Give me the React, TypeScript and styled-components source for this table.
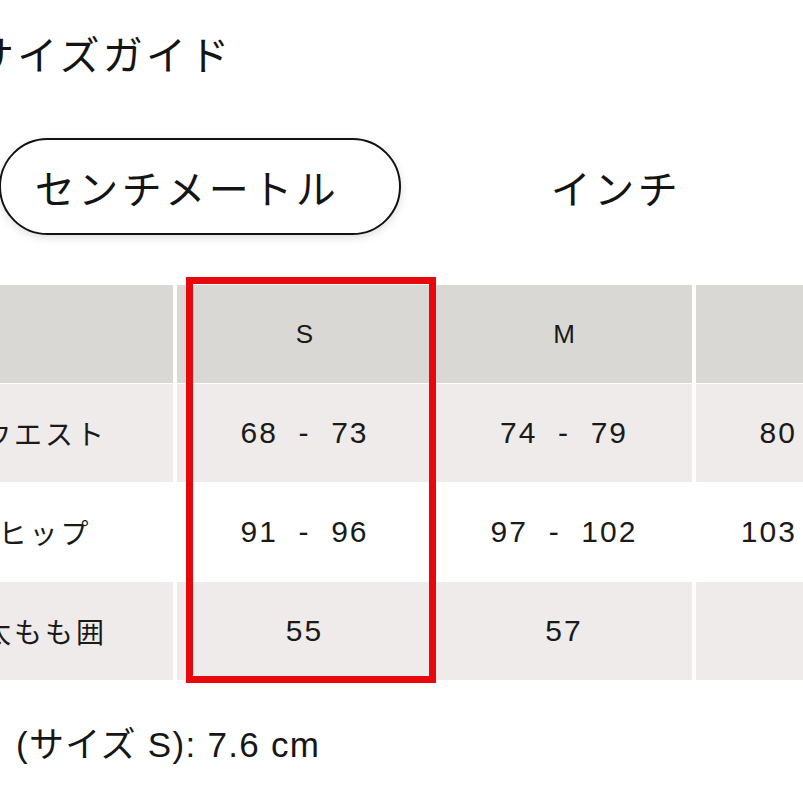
import React from "react";
import styled, { createGlobalStyle } from "styled-components";

const GlobalStyle = createGlobalStyle`
  html, body {
    margin: 0;
    padding: 0;
    background: #ffffff;
    overflow: hidden;
  }
  body {
    width: 803px;
    height: 803px;
    font-family: "Liberation Sans", "Noto Sans CJK JP", sans-serif;
    color: #161616;
  }
`;

const Page = styled.div`
  display: flex;
  flex-direction: column;
  align-items: flex-start;
  padding-top: 32px;
  width: 803px;
  overflow: hidden;
`;

const Title = styled.h1`
  margin: 0 0 0 -26px;
  font-family: "Noto Sans CJK JP", sans-serif;
  font-weight: 400;
  font-size: 40px;
  line-height: 42px;
  letter-spacing: 3.3px;
  white-space: nowrap;
  color: #141414;
`;

const Tabs = styled.div`
  display: flex;
  gap: 27px;
  margin: 64px 0 0 -1px;
`;

const Tab = styled.button<{ $active?: boolean }>`
  box-sizing: border-box;
  width: 402px;
  height: 97px;
  border-radius: 49px;
  border: 2.5px solid ${(p) => (p.$active ? "#121212" : "transparent")};
  background: #ffffff;
  box-shadow: ${(p) => (p.$active ? "0 3px 9px rgba(0, 0, 0, 0.13)" : "none")};
  display: flex;
  align-items: center;
  justify-content: center;
  padding: 0 26px 0 0;
  font-family: "Noto Sans CJK JP", sans-serif;
  font-weight: 400;
  font-size: 40px;
  letter-spacing: 3.5px;
  color: #141414;
  white-space: nowrap;
`;

const TableWrap = styled.div`
  position: relative;
  margin: 50px 0 0 -83px;
`;

const Grid = styled.div`
  display: grid;
  grid-template-columns: repeat(4, 256px);
  grid-auto-rows: 98px;
  column-gap: 3.5px;
  row-gap: 1px;
  background: #ffffff;
`;

const Cell = styled.div<{ $tone: "head" | "shade" | "plain" }>`
  display: flex;
  align-items: center;
  justify-content: center;
  background: ${(p) =>
    p.$tone === "head" ? "#d9d8d4" : p.$tone === "shade" ? "#eeebea" : "#ffffff"};
  color: #1a1a1a;
  white-space: pre;
`;

const HeadText = styled.span`
  font-family: "Liberation Sans", sans-serif;
  font-size: 26px;
  line-height: 1;
`;

const LabelText = styled.span`
  font-family: "Noto Sans CJK JP", sans-serif;
  font-size: 28px;
  letter-spacing: 3px;
  line-height: 1;
`;

const ValueText = styled.span`
  font-family: "Liberation Sans", sans-serif;
  font-size: 30px;
  letter-spacing: 2px;
  line-height: 1;
`;

const Highlight = styled.div`
  position: absolute;
  left: 269px;
  top: -8px;
  width: 250px;
  height: 406px;
  box-sizing: border-box;
  border: 7px solid #e8070d;
  pointer-events: none;
`;

const Note = styled.p`
  margin: 45px 0 0 16px;
  font-family: "Liberation Sans", "Noto Sans CJK JP", sans-serif;
  font-size: 35px;
  line-height: 40px;
  letter-spacing: 1.3px;
  color: #161616;
  white-space: pre;
`;

const sizes = ["S", "M", "L"];

const rows: { label: string; values: string[]; tone: "shade" | "plain" }[] = [
  { label: "ウエスト", values: ["68  -  73", "74  -  79", "80  -  85"], tone: "shade" },
  { label: "ヒップ", values: ["91  -  96", "97  -  102", "103  -  108"], tone: "plain" },
  { label: "太もも囲", values: ["55", "57", "59"], tone: "shade" },
];

export default function App() {
  return (
    <>
      <GlobalStyle />
      <Page>
        <Title>サイズガイド</Title>
        <Tabs>
          <Tab $active>センチメートル</Tab>
          <Tab>インチ</Tab>
        </Tabs>
        <TableWrap>
          <Grid>
            <Cell $tone="head" />
            {sizes.map((s) => (
              <Cell key={s} $tone="head">
                <HeadText>{s}</HeadText>
              </Cell>
            ))}
            {rows.map((r) => (
              <React.Fragment key={r.label}>
                <Cell $tone={r.tone}>
                  <LabelText>{r.label}</LabelText>
                </Cell>
                {r.values.map((v, i) => (
                  <Cell key={i} $tone={r.tone}>
                    <ValueText>{v}</ValueText>
                  </Cell>
                ))}
              </React.Fragment>
            ))}
          </Grid>
          <Highlight />
        </TableWrap>
        <Note>(サイズ S): 7.6 cm</Note>
      </Page>
    </>
  );
}
